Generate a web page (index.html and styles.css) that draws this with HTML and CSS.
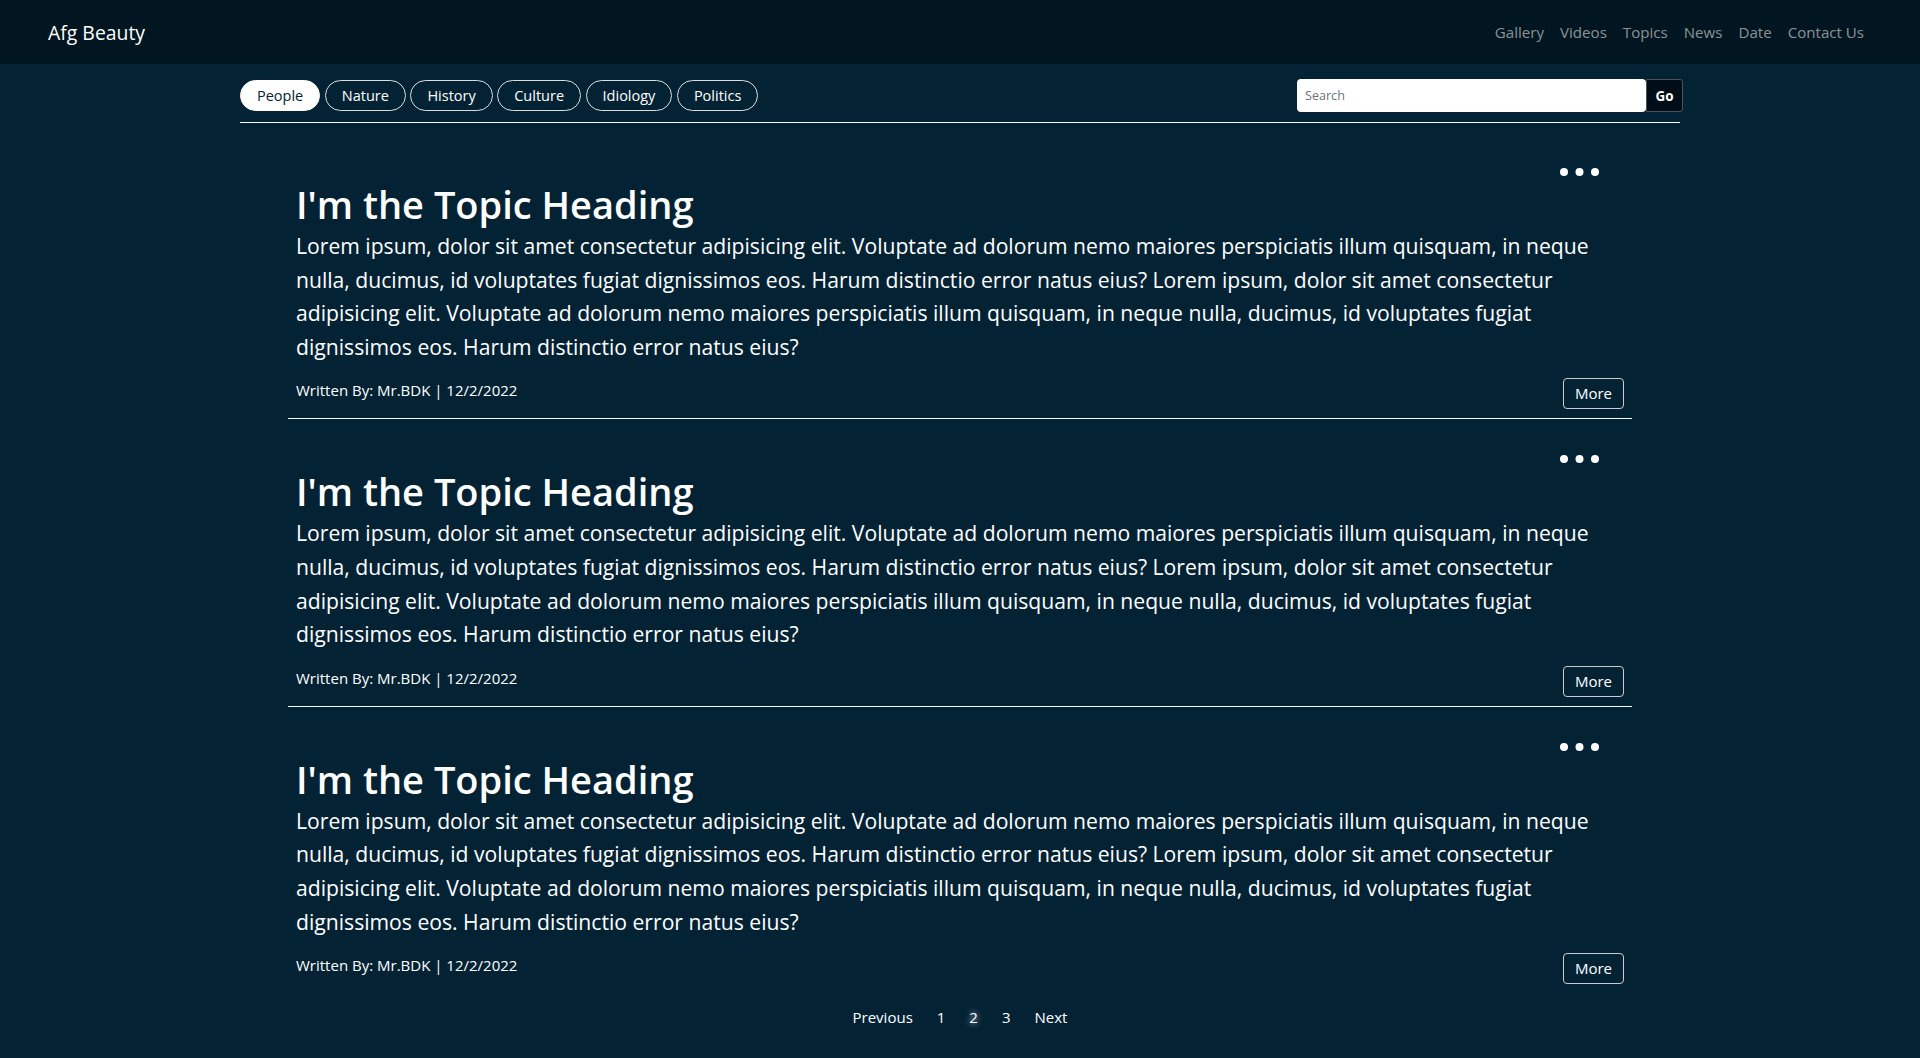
FILE: index.html
```html
<!DOCTYPE html>
<html lang="en">
<head>
    <meta charset="UTF-8">
    <meta name="viewport" content="width=device-width, initial-scale=1.0">
    <title>Afg Beauty</title>
    <link rel="stylesheet" href="styles.css">
</head>
<body>
    <nav class="topbar">
        <a class="brand" href="#">Afg Beauty</a>
        <ul class="nav-links">
            <li><a href="#">Gallery</a></li>
            <li><a href="#">Videos</a></li>
            <li><a href="#">Topics</a></li>
            <li><a href="#">News</a></li>
            <li><a href="#">Date</a></li>
            <li><a href="#">Contact Us</a></li>
        </ul>
    </nav>

    <main>
        <div class="filters">
            <div class="categories">
                <button class="pill active">People</button>
                <button class="pill">Nature</button>
                <button class="pill">History</button>
                <button class="pill">Culture</button>
                <button class="pill">Idiology</button>
                <button class="pill">Politics</button>
            </div>
            <form class="search">
                <input type="text" placeholder="Search">
                <button type="button">Go</button>
            </form>
        </div>

        <section class="posts">
            <article class="post">
                <div class="post-menu">
                    <svg width="39" height="8" viewBox="0 0 39 8"><circle cx="4" cy="4" r="4"/><circle cx="19.5" cy="4" r="4"/><circle cx="35" cy="4" r="4"/></svg>
                </div>
                <h2>I'm the Topic Heading</h2>
                <p>Lorem ipsum, dolor sit amet consectetur adipisicing elit. Voluptate ad dolorum nemo maiores perspiciatis illum quisquam, in neque nulla, ducimus, id voluptates fugiat dignissimos eos. Harum distinctio error natus eius? Lorem ipsum, dolor sit amet consectetur adipisicing elit. Voluptate ad dolorum nemo maiores perspiciatis illum quisquam, in neque nulla, ducimus, id voluptates fugiat dignissimos eos. Harum distinctio error natus eius?</p>
                <div class="post-footer">
                    <span class="meta">Written By: Mr.BDK | 12/2/2022</span>
                    <button class="more">More</button>
                </div>
            </article>
            <hr>
            <article class="post">
                <div class="post-menu">
                    <svg width="39" height="8" viewBox="0 0 39 8"><circle cx="4" cy="4" r="4"/><circle cx="19.5" cy="4" r="4"/><circle cx="35" cy="4" r="4"/></svg>
                </div>
                <h2>I'm the Topic Heading</h2>
                <p>Lorem ipsum, dolor sit amet consectetur adipisicing elit. Voluptate ad dolorum nemo maiores perspiciatis illum quisquam, in neque nulla, ducimus, id voluptates fugiat dignissimos eos. Harum distinctio error natus eius? Lorem ipsum, dolor sit amet consectetur adipisicing elit. Voluptate ad dolorum nemo maiores perspiciatis illum quisquam, in neque nulla, ducimus, id voluptates fugiat dignissimos eos. Harum distinctio error natus eius?</p>
                <div class="post-footer">
                    <span class="meta">Written By: Mr.BDK | 12/2/2022</span>
                    <button class="more">More</button>
                </div>
            </article>
            <hr>
            <article class="post">
                <div class="post-menu">
                    <svg width="39" height="8" viewBox="0 0 39 8"><circle cx="4" cy="4" r="4"/><circle cx="19.5" cy="4" r="4"/><circle cx="35" cy="4" r="4"/></svg>
                </div>
                <h2>I'm the Topic Heading</h2>
                <p>Lorem ipsum, dolor sit amet consectetur adipisicing elit. Voluptate ad dolorum nemo maiores perspiciatis illum quisquam, in neque nulla, ducimus, id voluptates fugiat dignissimos eos. Harum distinctio error natus eius? Lorem ipsum, dolor sit amet consectetur adipisicing elit. Voluptate ad dolorum nemo maiores perspiciatis illum quisquam, in neque nulla, ducimus, id voluptates fugiat dignissimos eos. Harum distinctio error natus eius?</p>
                <div class="post-footer">
                    <span class="meta">Written By: Mr.BDK | 12/2/2022</span>
                    <button class="more">More</button>
                </div>
            </article>
        </section>

        <nav class="pager">
            <a href="#">Previous</a>
            <a href="#">1</a>
            <a href="#" class="current">2</a>
            <a href="#">3</a>
            <a href="#">Next</a>
        </nav>
    </main>
</body>
</html>
```

FILE: styles.css
```css
* {
    margin: 0;
    padding: 0;
    box-sizing: border-box;
}

body {
    font-family: "Open Sans", "Noto Sans", sans-serif;
    background-color: #032335;
    color: #fff;
    min-height: 100vh;
}

a {
    text-decoration: none;
    color: inherit;
}

/* top navigation */
.topbar {
    display: flex;
    justify-content: space-between;
    align-items: center;
    height: 64px;
    padding: 0 48px;
    background-color: #011620;
}

.brand {
    font-size: 19.4px;
    color: #fff;
}

.nav-links {
    display: flex;
    list-style: none;
}

.nav-links a {
    display: block;
    padding: 8px;
    font-size: 15.1px;
    color: rgba(255, 255, 255, 0.55);
}

/* categories + search */
.filters {
    width: 75%;
    margin: 0 auto;
    padding: 15px 0 10px;
    display: flex;
    justify-content: space-between;
    align-items: center;
    border-bottom: 1px solid #fff;
}

.categories {
    display: flex;
    gap: 4.5px;
}

.pill {
    font-family: inherit;
    font-size: 14.5px;
    line-height: 21px;
    padding: 4px 16px;
    border: 1px solid #ddd;
    border-radius: 16px;
    background: transparent;
    color: #fff;
    cursor: pointer;
}

.pill.active {
    background-color: #fff;
    color: #032335;
    border-color: #fff;
}

.search {
    display: flex;
    margin-right: -3px;
}

.search input {
    width: 349px;
    height: 33px;
    padding: 0 8px;
    font-family: inherit;
    font-size: 12.6px;
    border: none;
    border-radius: 4px;
    outline: none;
}

.search input::placeholder {
    color: #6c757d;
}

.search button {
    width: 37px;
    height: 33px;
    font-family: inherit;
    font-size: 13.4px;
    font-weight: 700;
    color: #fff;
    background-color: #000f17;
    border: 1px solid #4a5459;
    border-radius: 0 3px 3px 0;
}

/* posts */
.posts {
    width: 70%;
    margin: 9px auto 0;
}

.post {
    padding-top: 36px;
}

.post-menu {
    display: flex;
    justify-content: flex-end;
    padding-right: 33px;
    height: 8px;
}

.post-menu svg {
    display: block;
    fill: #fff;
}

.post h2 {
    margin-top: 4px;
    padding-left: 8px;
    font-size: 38px;
    font-weight: 600;
    line-height: 49px;
}

.post p {
    padding: 0 8px;
    margin-bottom: 15px;
    font-size: 21.15px;
    line-height: 33.6px;
}

.post-footer {
    display: flex;
    justify-content: space-between;
    align-items: flex-start;
    padding: 0 8px;
    height: 31px;
}

.meta {
    font-size: 15px;
    line-height: 24px;
}

.more {
    font-family: inherit;
    font-size: 15px;
    line-height: 21px;
    padding: 4px 11px;
    color: #fff;
    background: transparent;
    border: 1px solid #ccc;
    border-radius: 4px;
    cursor: pointer;
}

.posts hr {
    border: none;
    border-top: 1px solid #fff;
    margin-top: 9px;
}

/* pagination */
.pager {
    display: flex;
    justify-content: center;
    margin-top: 15px;
}

.pager a {
    padding: 6px 12px;
    font-size: 15px;
    line-height: 24px;
    color: #fff;
}

.pager .current {
    text-shadow: 0 0 6px #fff;
}
```
